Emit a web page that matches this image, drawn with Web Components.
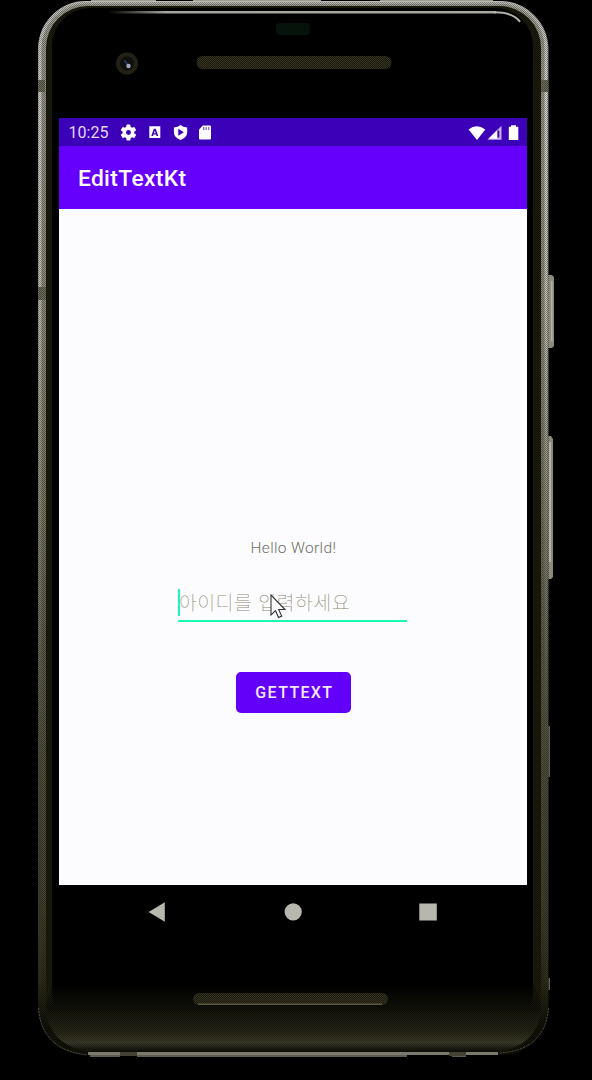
<!DOCTYPE html>
<html lang="ko">
<head>
<meta charset="utf-8">
<title>EditTextKt</title>
<style>
html,body{margin:0;background:#000;overflow:hidden}
body{font-family:Roboto,"Noto Sans CJK KR",sans-serif}
</style>
</head>
<body>
<phone-device>
  <status-bar time="10:25"></status-bar>
  <app-bar>EditTextKt</app-bar>
  <main-screen>
    <hello-label>Hello World!</hello-label>
    <edit-text>아이디를 입력하세요</edit-text>
    <app-button>GETTEXT</app-button>
  </main-screen>
  <nav-bar></nav-bar>
</phone-device>
<script>
function define(name, html) {
  const t = document.createElement('template');
  t.innerHTML = html;
  customElements.define(name, class extends HTMLElement {
    constructor() {
      super();
      this.attachShadow({mode: 'open'}).append(t.content.cloneNode(true));
    }
    connectedCallback() {
      const s = this.shadowRoot.querySelector('.time');
      if (s) s.textContent = this.getAttribute('time');
    }
  });
}

define('device-frame', `
<style>:host{display:block}svg{display:block}</style>
<svg width="592" height="1080" viewBox="0 0 592 1080">
  <defs>
    <linearGradient id="rim" x1="0" y1="0" x2="0" y2="1">
      <stop offset="0" stop-color="#a09f94"/><stop offset=".05" stop-color="#99988c"/>
      <stop offset=".3" stop-color="#8c8b78"/><stop offset=".48" stop-color="#77765f"/>
      <stop offset=".62" stop-color="#5b5a44"/><stop offset=".85" stop-color="#45442c"/>
      <stop offset=".93" stop-color="#2e2d18"/><stop offset=".97" stop-color="#12120a"/><stop offset="1" stop-color="#12120a"/>
    </linearGradient>
    <linearGradient id="shine" x1="0" y1="0" x2="0" y2="1">
      <stop offset="0" stop-color="#bdbcb4"/><stop offset=".08" stop-color="#d8d8d2"/>
      <stop offset=".28" stop-color="#c3c2b6"/><stop offset=".5" stop-color="#88877a"/>
      <stop offset=".7" stop-color="#545342"/><stop offset=".9" stop-color="#3c3b28" />
      <stop offset=".95" stop-color="#33321f" stop-opacity="0"/>
    </linearGradient>
    <linearGradient id="chin" x1="0" y1="985" x2="0" y2="1052" gradientUnits="userSpaceOnUse">
      <stop offset="0" stop-color="#12120a" stop-opacity="0"/><stop offset=".35" stop-color="#12120a"/>
      <stop offset=".72" stop-color="#2b2a19"/><stop offset=".86" stop-color="#403f2d"/><stop offset="1" stop-color="#0c0c05"/>
    </linearGradient>
    <linearGradient id="glint" x1="0" y1="0" x2="1" y2="0">
      <stop offset="0" stop-color="#a5a490" stop-opacity="0"/><stop offset=".15" stop-color="#a5a49a"/><stop offset="1" stop-color="#aaa99d"/>
    </linearGradient>
    <pattern id="grain" width="2" height="2" patternUnits="userSpaceOnUse">
      <path d="M0 0h1v1H0zM1 1h1v1H1z" fill="#000" fill-opacity=".35"/>
    </pattern>
    <pattern id="grille" width="2" height="2" patternUnits="userSpaceOnUse">
      <path d="M0 0h2v2H0z" fill="#1b1a0a"/><path d="M0 0h1v1H0zM1 1h1v1H1z" fill="#343326"/>
    </pattern>
  </defs>
  <path fill="#000" d="M0 0h592v1080H0z"/>
  <path fill="#a09f8e" d="M91 0h65v4H91zM193 0h128v4H193zM380 0h113v4H380z"/>
  <path fill="#8b8a7c" d="M547 275h5l2 2v69l-2 2h-5zM547 436h4l2 3v138l-2 2h-4z"/>
  <path fill="#b3b2a9" d="M551 281h1.500v60H551zM549 442h2v120h-2z"/>
  <path fill="#5d5c46" d="M547 726h3v51h-3zM548 978h2v12h-2z"/>
  <rect x="38" y="2" width="510.500" height="1053" rx="47" fill="url(#rim)"/>
  <rect x="40" y="2.500" width="506" height="1051" rx="46" fill="none" stroke="url(#shine)" stroke-width="3"/>
  <rect x="46" y="6" width="495" height="1045" rx="42" fill="#1c1c0d"/>
  <rect x="38" y="2" width="511" height="1053" rx="47" fill="url(#grain)"/>
  <rect x="52" y="8" width="481" height="1022" rx="38" fill="#000"/>
  <path fill="url(#chin)" d="M52 985h483l6 20q-2 44-48 46H94q-46-2-48-46z"/>
  <path fill="url(#grain)" d="M52 985h483l6 20q-2 44-48 46H94q-46-2-48-46z"/>
  <path fill="none" stroke="#504f3c" stroke-width="1" stroke-dasharray="2 1" d="M38.500 1008q3 42 49 47M548.500 1008q-3 42-49 45"/>
  <path fill="#7b7a6d" d="M88 1052h410v3H88z"/>
  <path fill="#5c5b4d" d="M90 1055h30v2H90zM137 1055h270v2H137zM452 1055h14v2h-14z"/>
  <path fill="#424132" d="M120 1052h17v4h-17zM449 1052h17v4h-17z"/>
  <path fill="#6d6c5b" d="M38 80h7v12h-7zM541 80h7v12h-7zM38 287h8v13h-8z"/>
  <path fill="url(#grain)" d="M38 80h7v12h-7zM541 80h7v12h-7zM38 287h8v13h-8z"/>
  <path fill="url(#glint)" d="M108 11h388v2.500H108z"/>
  <path fill="none" stroke="#b5b4a9" stroke-width="2" d="M494 12.300q19 0 26 9.500"/>
  <rect x="276" y="23" width="34" height="12" rx="4" fill="#08170e"/><rect x="276" y="23" width="34" height="12" rx="4" fill="url(#grain)"/>
  <rect x="196.500" y="56" width="195" height="13" rx="6" fill="url(#grille)"/>
  <rect x="193" y="993" width="195" height="12" rx="6" fill="url(#grille)"/>
  <path fill="#5a5940" d="M198 1003.500h184v1.500H198z"/>
  <circle cx="127" cy="63.500" r="11" fill="#29281a"/><circle cx="127" cy="63.500" r="11" fill="url(#grain)"/>
  <circle cx="127" cy="63.500" r="7" fill="#0f0f0c"/>
  <path d="M124.500 60.500l3 4" stroke="#29395f" stroke-width="2"/>
  <circle cx="128.500" cy="66" r="2.200" fill="#a0a8bd"/>
</svg>`);

define('phone-device', `
<style>
:host{display:grid;width:592px;height:1080px}
device-frame,.screen{grid-area:1/1}
.screen{display:flex;flex-direction:column;margin:118px 65px 0 59.400px;height:822px;z-index:1}
</style>
<device-frame></device-frame>
<div class="screen"><slot></slot></div>`);

define('status-bar', `
<style>
:host{display:flex;flex:none;align-items:center;box-sizing:border-box;height:28px;padding:1px 7.500px 0 9px;background:#3c00b8;color:#e6d6fc;font-size:16px;letter-spacing:.05px}
.time{width:52px;line-height:28px}
.left{display:flex;gap:8.700px;flex:1}
.right{display:flex;align-items:center}
svg{display:block;fill:#fdfcff}
</style>
<span class="time"></span>
<div class="left">
<svg width="17" height="17" viewBox="1 1 22 22"><path fill-rule="evenodd" d="M19.400 13a7.500 7.500 0 0 0 0-2l2.200-1.700c.2-.2.300-.5.100-.7l-2-3.500a.5.500 0 0 0-.6-.2l-2.600 1a7.300 7.300 0 0 0-1.700-1l-.4-2.700a.5.500 0 0 0-.5-.4h-4a.5.500 0 0 0-.5.400L9 4.900a7.700 7.700 0 0 0-1.700 1l-2.500-1a.5.500 0 0 0-.6.200l-2 3.500c-.1.200 0 .5.100.7L4.500 11a8 8 0 0 0 0 2l-2.200 1.700a.5.500 0 0 0-.1.700l2 3.500c.1.200.4.300.6.200l2.500-1c.5.400 1.100.7 1.700 1l.4 2.700c0 .2.200.4.500.4h4c.3 0 .5-.2.500-.4l.4-2.700a7.300 7.300 0 0 0 1.700-1l2.600 1c.2.100.5 0 .6-.2l2-3.500a.5.500 0 0 0-.1-.7zM12 15.200a3.200 3.200 0 1 1 0-6.400 3.200 3.200 0 0 1 0 6.400z"/></svg>
<svg width="17" height="17" viewBox="-.5 0 17 17"><path fill-rule="evenodd" d="M2.800 2.300h11V14h-11zM7.300 4.800 4.800 12h1.800l.4-1.500h2.600L10 12h1.800L9.200 4.800zm1 1.800.8 2.600H7.500z"/></svg>
<svg width="17" height="17" viewBox="0 0 17 17"><path fill-rule="evenodd" d="M8.500 1Q11 3.100 15.200 3.500v4.700q0 5-6.700 7.800-6.600-2.800-6.600-7.800V3.500Q6 3.100 8.500 1zM6.300 4.800v7l5.500-3.500z"/></svg>
<svg width="17" height="17" viewBox="0 0 17 17"><path d="M5.800 1.400H13q1 0 1 1v12q0 1-1 1H3q-1 0-1-1V5.400z"/><path fill="#8a6bd0" d="M6 3h1.400v3H6zM8.500 3h1.300v3H8.500zM11 3h1.300v3H11z"/></svg>
</div>
<div class="right">
<svg width="52" height="18" viewBox="0 0 52 18"><path d="M.6 5.500Q8.500-1 17.300 5.500L9 16z"/><path fill="#c9aef5" d="M33.500 1.800v14H19.400z"/><path d="M29 6.300v8.500h-8.500z"/><path fill="#3a00a8" d="M29.500 6.500h1.800v7h-1.800z"/><path d="M43 1.300h5v1.500h2.300V16h-9.500V2.800H43z"/></svg>
</div>`);

define('app-bar', `
<style>:host{display:flex;flex:none;align-items:center;box-sizing:border-box;height:62.500px;padding:2px 0 0 18.500px;background:#6500fc;color:#fdfbff;font-weight:500;font-size:22.800px;letter-spacing:.35px}</style>
<slot></slot>`);

define('main-screen', `
<style>:host{display:flex;flex:none;flex-direction:column;align-items:center;box-sizing:border-box;height:676.500px;padding-top:329px;background:#fcfcff}</style>
<slot></slot>`);

define('hello-label', `
<style>:host{display:block;font-size:15.500px;line-height:20px;color:#6f6f62;font-weight:300;letter-spacing:.35px}</style>
<slot></slot>`);

define('edit-text', `
<style>
:host{display:block;width:229px;margin:31px 2px 0 0;position:relative}
.field{display:flex;align-items:center;height:27px;font:100 19.500px/25px "Noto Sans CJK KR",sans-serif;color:#8a886c;white-space:nowrap;letter-spacing:.42px}
.text{height:27px}
.caret{width:2px;height:27px;margin-right:-1px;background:#19f5c0}
.line{height:2px;margin-top:4px;background:#19fbb4}
svg{position:absolute;left:92px;top:5.500px}
</style>
<div class="field"><span class="caret"></span><span class="text"><slot></slot></span></div><div class="line"></div>
<svg width="18" height="25" viewBox="0 0 18 25"><path d="M1 1v20l4.500-4.300 3 6.800 3.200-1.400-3-6.600H15z" fill="#fcfcff" stroke="#333" stroke-width="1.100"/></svg>`);

define('app-button', `
<style>:host{display:flex;align-items:center;justify-content:center;box-sizing:border-box;width:115px;height:41px;padding:1px 0 0 2px;margin-top:50px;border-radius:5px;background:#6200fa;color:#f7e9ff;font-weight:500;font-size:16px;letter-spacing:1.350px}</style>
<slot></slot>`);

define('nav-bar', `
<style>:host{display:block;height:54px}svg{display:block}</style>
<svg width="468" height="54" viewBox="0 0 468 54" fill="#b8b7ae"><path d="M89.600 27 105.800 17.300v19.400zM360.300 18.500h17.500v17h-17.500z"/><circle cx="234.200" cy="26.800" r="8.600"/></svg>`);
</script>
</body>
</html>
